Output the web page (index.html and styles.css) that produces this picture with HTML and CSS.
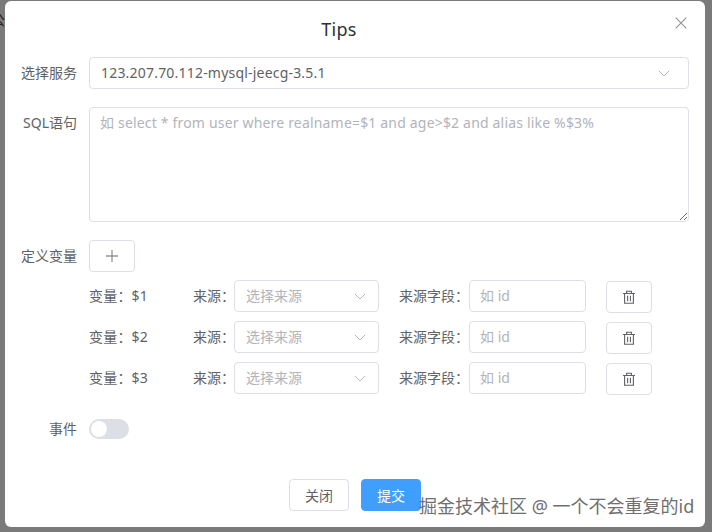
FILE: index.html
```html
<!DOCTYPE html>
<html lang="zh">
<head>
<meta charset="utf-8">
<title>Tips</title>
<link rel="stylesheet" href="styles.css">
</head>
<body>
<span class="behind-glyph">公</span>
<div class="dialog">
  <header class="dialog-header">
    <h2 class="dialog-title">Tips</h2>
    <svg class="close" width="12" height="12" viewBox="0 0 12 12"><path d="M.7.7l10.6 10.6M11.3.7L.7 11.3" fill="none" stroke="#8f9296" stroke-width="1.1"/></svg>
  </header>
  <div class="form">
    <div class="item item-service">
      <label class="label">选择服务</label>
      <div class="select select-wide">
        <span class="value">123.207.70.112-mysql-jeecg-3.5.1</span>
        <svg class="chev" width="12" height="7" viewBox="0 0 12 7"><path d="M1 1l5 5 5-5" fill="none" stroke="#b4b7bd" stroke-width="1"/></svg>
      </div>
    </div>
    <div class="item item-sql">
      <label class="label">SQL语句</label>
      <textarea class="textarea" placeholder="如 select * from user where realname=$1 and age>$2 and alias like %$3%"></textarea>
    </div>
    <div class="item item-vars">
      <label class="label">定义变量</label>
      <div class="btn btn-icon">
        <svg width="14" height="14" viewBox="0 0 14 14"><path d="M7 1v12M1 7h12" fill="none" stroke="#909399" stroke-width="1.3"/></svg>
      </div>
    </div>
    <div class="vars">
      <div class="var-row">
        <span class="var-name">变量：$1</span>
        <span class="src-label">来源：</span>
        <div class="select select-src"><span class="ph">选择来源</span><svg class="chev" width="12" height="7" viewBox="0 0 12 7"><path d="M1 1l5 5 5-5" fill="none" stroke="#b4b7bd" stroke-width="1"/></svg></div>
        <span class="field-label">来源字段：</span>
        <div class="input"><span class="ph">如 id</span></div>
        <div class="btn btn-icon btn-del"><svg width="14" height="14" viewBox="0 0 14 14"><path d="M1 3.5h12M4.6 3.5V1.2h4.8v2.3M2.6 3.5v9.8h8.8V3.5M5.6 5.8v5.4M8.4 5.8v5.4" fill="none" stroke="#606266" stroke-width="1.1"/></svg></div>
      </div>
      <div class="var-row">
        <span class="var-name">变量：$2</span>
        <span class="src-label">来源：</span>
        <div class="select select-src"><span class="ph">选择来源</span><svg class="chev" width="12" height="7" viewBox="0 0 12 7"><path d="M1 1l5 5 5-5" fill="none" stroke="#b4b7bd" stroke-width="1"/></svg></div>
        <span class="field-label">来源字段：</span>
        <div class="input"><span class="ph">如 id</span></div>
        <div class="btn btn-icon btn-del"><svg width="14" height="14" viewBox="0 0 14 14"><path d="M1 3.5h12M4.6 3.5V1.2h4.8v2.3M2.6 3.5v9.8h8.8V3.5M5.6 5.8v5.4M8.4 5.8v5.4" fill="none" stroke="#606266" stroke-width="1.1"/></svg></div>
      </div>
      <div class="var-row">
        <span class="var-name">变量：$3</span>
        <span class="src-label">来源：</span>
        <div class="select select-src"><span class="ph">选择来源</span><svg class="chev" width="12" height="7" viewBox="0 0 12 7"><path d="M1 1l5 5 5-5" fill="none" stroke="#b4b7bd" stroke-width="1"/></svg></div>
        <span class="field-label">来源字段：</span>
        <div class="input"><span class="ph">如 id</span></div>
        <div class="btn btn-icon btn-del"><svg width="14" height="14" viewBox="0 0 14 14"><path d="M1 3.5h12M4.6 3.5V1.2h4.8v2.3M2.6 3.5v9.8h8.8V3.5M5.6 5.8v5.4M8.4 5.8v5.4" fill="none" stroke="#606266" stroke-width="1.1"/></svg></div>
      </div>
    </div>
    <div class="item item-event">
      <label class="label">事件</label>
      <div class="switch"><span class="knob"></span></div>
    </div>
  </div>
  <footer class="footer">
    <div class="btn btn-text">关闭</div>
    <div class="btn btn-text btn-primary">提交</div>
  </footer>
</div>
<span class="watermark">掘金技术社区 @ 一个不会重复的id</span>
</body>
</html>
```
FILE: styles.css
```css
* { box-sizing: border-box; }
html, body { margin: 0; height: 100%; overflow: hidden; }
body {
  position: relative;
  width: 712px;
  height: 532px;
  padding: 1px 7px 5px 5px;
  background: #7a7a7a;
  font-family: "Noto Sans", "Noto Sans CJK SC", sans-serif;
  font-size: 14px;
  color: #606266;
}
.behind-glyph { position: absolute; left: -9px; top: 9px; font-size: 14px; color: #222; }
.dialog {
  position: relative;
  width: 700px;
  height: 526px;
  background: #fff;
  border-radius: 6px;
  display: flex;
  flex-direction: column;
}
.dialog-header { position: relative; height: 56px; display: flex; justify-content: center; padding: 15px 32px 0 0; }
.dialog-title { margin: 0; font-size: 18px; font-weight: 400; line-height: 26px; letter-spacing: .3px; color: #303133; }
.close { position: absolute; right: 18px; top: 16px; }
.form { flex: 1; padding-right: 16px; }
.item { display: flex; align-items: flex-start; }
.label { width: 84px; padding-right: 12px; height: 32px; line-height: 32px; text-align: right; font-size: 14px; white-space: nowrap; flex: none; }
.select, .input, .textarea, .btn { border: 1px solid #dcdfe6; border-radius: 4px; background: #fff; }
.select { height: 32px; display: flex; align-items: center; justify-content: space-between; }
.select-wide { width: 600px; padding: 0 18px 0 11px; }
.value { font-size: 14px; line-height: 30px; letter-spacing: .2px; }
.item-sql { margin-top: 18px; }
.textarea {
  display: block;
  width: 600px;
  height: 115px;
  padding: 4px 10px;
  font: inherit;
  font-size: 14px;
  line-height: 21px;
  letter-spacing: .18px;
  color: #606266;
  outline: none;
}
.textarea::placeholder { color: #b1b4ba; opacity: 1; }
.item-vars { margin-top: 18px; }
.btn { display: flex; align-items: center; justify-content: center; }
.btn-icon { width: 46px; height: 32px; }
.vars { padding-left: 84px; margin-top: 8px; display: flex; flex-direction: column; gap: 9px; }
.var-row { display: flex; align-items: center; height: 32px; font-size: 14px; white-space: nowrap; }
.var-name { width: 104px; padding-bottom: 2px; letter-spacing: .2px; }
.src-label { width: 41px; padding-bottom: 2px; }
.select-src { width: 145px; padding: 0 12px 0 11px; }
.field-label { width: 90px; padding: 0 0 2px 20px; }
.input { width: 117px; height: 32px; padding: 0 10px; display: flex; align-items: center; }
.ph { color: #b1b4ba; font-size: 14px; padding-bottom: 2px; }
.btn-del { margin-left: 20px; position: relative; top: 1px; }
.item-event { margin-top: 25px; }
.item-event .label { height: 32px; line-height: 32px; margin-top: -6px; margin-bottom: -6px; }
.switch { width: 40px; height: 20px; border-radius: 10px; background: #dcdfe6; padding: 2px; }
.knob { display: block; width: 16px; height: 16px; border-radius: 50%; background: #fff; }
.footer { height: 48px; display: flex; justify-content: center; gap: 12px; }
.btn-text { width: 60px; height: 32px; font-size: 14px; padding-bottom: 1px; }
.btn-primary { background: #409eff; border-color: #409eff; color: #fff; }
.watermark {
  position: absolute;
  left: 419px;
  top: 494px;
  font-size: 18px;
  line-height: 24px;
  color: #6f6f6f;
  white-space: nowrap;
  text-shadow: 1px 1px 0 rgba(255,255,255,.8);
}
```
